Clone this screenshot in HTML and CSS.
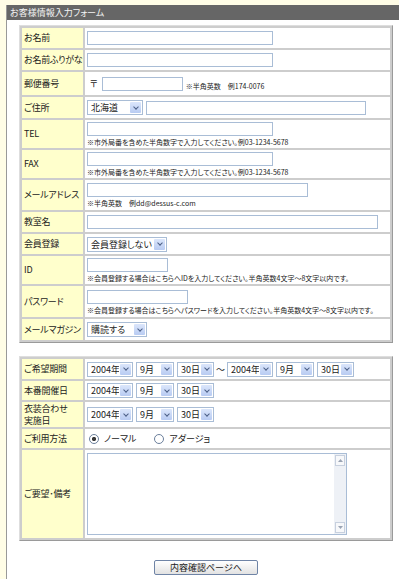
FILE: index.html
```html
<!DOCTYPE html>
<html lang="ja">
<head>
    <meta charset="UTF-8">
    <title>お客様情報入力フォーム</title>
    <link rel="stylesheet" href="styles.css">
</head>
<body>
    <div class="main">
        <h1 class="title">お客様情報入力フォーム</h1>
        <form class="order-form">
            <table class="form-table">
                <colgroup><col class="label-col"><col></colgroup>
                <tr class="h20">
                    <th>お名前</th>
                    <td><input type="text" class="w186"></td>
                </tr>
                <tr class="h20">
                    <th>お名前ふりがな</th>
                    <td><input type="text" class="w186"></td>
                </tr>
                <tr class="h23">
                    <th>郵便番号</th>
                    <td>
                        <div class="line">
                            <span class="zip-mark">〒</span>
                            <input type="text" class="w81">
                            <span class="note">※半角英数　例174-0076</span>
                        </div>
                    </td>
                </tr>
                <tr class="h21">
                    <th>ご住所</th>
                    <td>
                        <div class="line">
                            <span class="select w56"><select><option>北海道</option></select><span class="arrow"></span></span>
                            <input type="text" class="w220">
                        </div>
                    </td>
                </tr>
                <tr class="h28">
                    <th>TEL</th>
                    <td>
                        <input type="text" class="w186">
                        <div class="note">※市外局番を含めた半角数字で入力してください。例03-1234-5678</div>
                    </td>
                </tr>
                <tr class="h28">
                    <th>FAX</th>
                    <td>
                        <input type="text" class="w186">
                        <div class="note">※市外局番を含めた半角数字で入力してください。例03-1234-5678</div>
                    </td>
                </tr>
                <tr class="h30">
                    <th>メールアドレス</th>
                    <td>
                        <input type="text" class="w221">
                        <div class="note">※半角英数　例dd@dessus-c.com</div>
                    </td>
                </tr>
                <tr class="h20">
                    <th>教室名</th>
                    <td><input type="text" class="w291"></td>
                </tr>
                <tr class="h20">
                    <th>会員登録</th>
                    <td><span class="select w80"><select><option>会員登録しない</option></select><span class="arrow"></span></span></td>
                </tr>
                <tr class="h28">
                    <th>ID</th>
                    <td>
                        <input type="text" class="w81">
                        <div class="note">※会員登録する場合はこちらへIDを入力してください。半角英数4文字～8文字以内です。</div>
                    </td>
                </tr>
                <tr class="h31">
                    <th>パスワード</th>
                    <td>
                        <input type="password" class="w101">
                        <div class="note">※会員登録する場合はこちらへパスワードを入力してください。半角英数4文字～8文字以内です。</div>
                    </td>
                </tr>
                <tr class="h21">
                    <th>メールマガジン</th>
                    <td><span class="select w60"><select><option>購読する</option></select><span class="arrow"></span></span></td>
                </tr>
            </table>

            <table class="form-table second">
                <colgroup><col class="label-col"><col></colgroup>
                <tr class="h20">
                    <th>ご希望期間</th>
                    <td>
                        <div class="line">
                            <span class="select w46"><select><option>2004年</option></select><span class="arrow"></span></span>
                            <span class="select w38"><select><option>9月</option></select><span class="arrow"></span></span>
                            <span class="select w37"><select><option>30日</option></select><span class="arrow"></span></span>
                            <span class="tilde">～</span>
                            <span class="select w46"><select><option>2004年</option></select><span class="arrow"></span></span>
                            <span class="select w38"><select><option>9月</option></select><span class="arrow"></span></span>
                            <span class="select w37"><select><option>30日</option></select><span class="arrow"></span></span>
                        </div>
                    </td>
                </tr>
                <tr class="h19">
                    <th>本番開催日</th>
                    <td>
                        <div class="line">
                            <span class="select w46"><select><option>2004年</option></select><span class="arrow"></span></span>
                            <span class="select w38"><select><option>9月</option></select><span class="arrow"></span></span>
                            <span class="select w37"><select><option>30日</option></select><span class="arrow"></span></span>
                        </div>
                    </td>
                </tr>
                <tr class="h25">
                    <th class="two-lines">衣装合わせ<br>実施日</th>
                    <td>
                        <div class="line">
                            <span class="select w46"><select><option>2004年</option></select><span class="arrow"></span></span>
                            <span class="select w38"><select><option>9月</option></select><span class="arrow"></span></span>
                            <span class="select w37"><select><option>30日</option></select><span class="arrow"></span></span>
                        </div>
                    </td>
                </tr>
                <tr class="h19">
                    <th>ご利用方法</th>
                    <td>
                        <div class="line radios">
                            <label><input type="radio" name="plan" checked> ノーマル</label>
                            <label><input type="radio" name="plan"> アダージョ</label>
                        </div>
                    </td>
                </tr>
                <tr>
                    <th>ご要望･備考</th>
                    <td>
                        <div class="memo">
                            <textarea></textarea>
                            <div class="scrollbar">
                                <span class="sb-btn">
                                    <svg width="5" height="3" viewBox="0 0 5 3"><path d="M0 3L2.5 0L5 3Z" fill="#9aa4b4"/></svg>
                                </span>
                                <span class="sb-track"></span>
                                <span class="sb-btn">
                                    <svg width="5" height="3" viewBox="0 0 5 3"><path d="M0 0L2.5 3L5 0Z" fill="#9aa4b4"/></svg>
                                </span>
                            </div>
                        </div>
                    </td>
                </tr>
            </table>

            <div class="actions">
                <button type="submit">内容確認ページへ</button>
            </div>
        </form>
    </div>
</body>
</html>
```

FILE: styles.css
```css
body {
    margin: 0;
    background: #fffde6;
    font-family: "Noto Sans CJK JP", "Noto Sans", sans-serif;
    font-size: 9px;
    color: #222;
    font-feature-settings: "palt";
}

.main {
    margin: 5px 0 0 6px;
    border-left: 1px solid #999;
    background: #fff;
    min-height: 600px;
}

.title {
    margin: 0;
    height: 15px;
    line-height: 15px;
    padding-left: 3px;
    background: #666;
    color: #f4f4f4;
    font-size: 9px;
    font-weight: normal;
}

.order-form {
    padding: 5px 0 0 12px;
    width: 374px;
}

.form-table {
    width: 374px;
    table-layout: fixed;
    border-collapse: separate;
    border-spacing: 2px;
    background: #cdcdcd;
    border: 1px solid;
    border-color: #dedede #9a9a9a #9a9a9a #dedede;
}

.form-table .label-col {
    width: 61px;
}

.form-table.second {
    margin-top: 13px;
}

.form-table th {
    padding: 0 2px;
    background: #ffffcc;
    text-align: left;
    font-weight: normal;
    line-height: 10px;
    letter-spacing: -0.25px;
    white-space: nowrap;
}

.form-table th.two-lines {
    line-height: 12px;
}

.form-table td {
    padding: 0 2px;
    background: #fff;
    vertical-align: middle;
}

.h19 { height: 19px; }
.h20 { height: 20px; }
.h21 { height: 21px; }
.h23 { height: 23px; }
.h25 { height: 25px; }
.h28 { height: 28px; }
.h30 { height: 30px; }
.h31 { height: 31px; }

.line {
    display: flex;
    align-items: center;
    gap: 3px;
}

input[type="text"],
input[type="password"] {
    display: block;
    box-sizing: border-box;
    height: 14px;
    margin: 0;
    padding: 0 2px;
    border: 1px solid #a9bdd6;
    font-size: 9px;
}

.w81 { width: 81px; }
.w101 { width: 101px; }
.w186 { width: 186px; }
.w220 { width: 220px; }
.w221 { width: 221px; }
.w291 { width: 291px; }

.zip-mark {
    padding: 0 1px 0 3px;
}

.note {
    margin-top: 2px;
    font-size: 7px;
    line-height: 8px;
    white-space: nowrap;
    color: #222;
}

.line .note {
    margin-top: 4px;
}

.select {
    display: inline-flex;
    box-sizing: border-box;
    height: 15px;
    border: 1px solid #a9bdd6;
    background: #fff;
}

.select select {
    flex: 1;
    min-width: 0;
    appearance: none;
    border: none;
    outline: none;
    background: transparent;
    padding: 0 0 0 3px;
    font-family: inherit;
    font-size: 9px;
    font-feature-settings: "palt";
    color: #222;
}

.select .arrow {
    width: 11px;
    margin: 1px;
    border-radius: 1px;
    background: linear-gradient(#dbe6fb, #b8cbf2);
    display: flex;
    align-items: center;
    justify-content: center;
}

.select .arrow::after {
    content: "";
    width: 3px;
    height: 3px;
    margin-top: -2px;
    border-right: 1.5px solid #4c5f86;
    border-bottom: 1.5px solid #4c5f86;
    transform: rotate(45deg);
}

.w37 { width: 37px; }
.w38 { width: 38px; }
.w46 { width: 46px; }
.w56 { width: 56px; }
.w60 { width: 60px; }
.w80 { width: 80px; }

.tilde {
    margin: 0 -1px;
    font-size: 9px;
}

.radios {
    gap: 18px;
    padding-left: 2px;
}

.radios label {
    display: flex;
    align-items: center;
    gap: 5px;
}

.radios input[type="radio"] {
    appearance: none;
    width: 10px;
    height: 10px;
    margin: 0;
    border: 1px solid #6b7f9c;
    border-radius: 50%;
    background: #fff;
}

.radios input[type="radio"]:checked {
    background: radial-gradient(circle, #3a3a3a 0 1.8px, #fff 2.4px);
}

.memo {
    display: flex;
    width: 260px;
    height: 82px;
    margin: 3px 0;
    box-sizing: border-box;
    border: 1px solid #a9bdd6;
}

.memo textarea {
    flex: 1;
    border: none;
    outline: none;
    resize: none;
    margin: 0;
    padding: 2px;
}

.scrollbar {
    width: 12px;
    display: flex;
    flex-direction: column;
    background: #eef1f6;
}

.sb-btn {
    height: 11px;
    margin: 1px;
    box-sizing: border-box;
    border: 1px solid #c7d0de;
    background: #f7f8fa;
    display: flex;
    align-items: center;
    justify-content: center;
}

.sb-track {
    flex: 1;
}

.actions {
    padding: 19px 0 10px;
    text-align: center;
}

.actions button {
    width: 104px;
    height: 15px;
    padding: 0;
    border: 1px solid #6f84a6;
    border-radius: 2px;
    background: linear-gradient(#ffffff, #e2e2e2);
    font-family: inherit;
    font-size: 9px;
    line-height: 13px;
    color: #222;
}
```
